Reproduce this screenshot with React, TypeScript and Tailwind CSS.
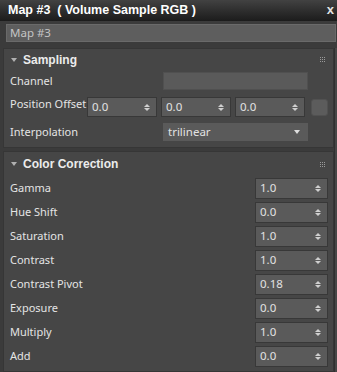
const font = { fontFamily: '"Noto Sans", "Open Sans", sans-serif' };
const arial = { fontFamily: '"Liberation Sans", Arial, sans-serif' };

const Dots = () => (
  <div className="grid grid-cols-3 gap-[1px]">
    {Array.from({ length: 9 }).map((_, i) => (
      <div key={i} className="w-[1px] h-[1px] bg-[#9a9a9a]" />
    ))}
  </div>
);

const Arrows = () => (
  <div className="flex flex-col items-center gap-[1px]">
    <div className="w-0 h-0 border-l-[3px] border-r-[3px] border-b-[3px] border-l-transparent border-r-transparent border-b-[#cfcfcf]" />
    <div className="w-0 h-0 border-l-[3px] border-r-[3px] border-t-[3px] border-l-transparent border-r-transparent border-t-[#cfcfcf]" />
  </div>
);

const Spinner = ({ value, w, h }: { value: string; w: string; h: string }) => (
  <div
    className={`${w} ${h} flex items-center justify-between bg-[#5a5a5a] border border-[#383838] pl-[4px] pr-[6px] text-[11.5px] text-[#e2e2e2]`}
  >
    <span>{value}</span>
    <Arrows />
  </div>
);

const Header = ({ title, h }: { title: string; h: string }) => (
  <div className={`${h} flex items-center justify-between pl-[7px] pr-[8px]`}>
    <div className="flex items-center gap-[6px]">
      <div className="w-0 h-0 border-l-[3px] border-r-[3px] border-t-[4px] border-l-transparent border-r-transparent border-t-[#b0b0b0]" />
      <span className="text-[12px] font-bold text-[#ececec]" style={arial}>
        {title}
      </span>
    </div>
    <Dots />
  </div>
);

const ccRows = [
  ["Gamma", "1.0"],
  ["Hue Shift", "0.0"],
  ["Saturation", "1.0"],
  ["Contrast", "1.0"],
  ["Contrast Pivot", "0.18"],
  ["Exposure", "0.0"],
  ["Multiply", "1.0"],
  ["Add", "0.0"],
];

export default function App() {
  return (
    <div className="w-[337px] h-[372px] overflow-hidden bg-[#3b3b3b] flex flex-col" style={font}>
      {/* title bar */}
      <div className="h-[21px] shrink-0 flex items-center justify-between pl-[8px] pr-[3px] bg-gradient-to-b from-[#424242] to-[#1c1c1c]">
        <span className="text-[12.5px] font-bold text-white whitespace-pre" style={arial}>
          Map #3  ( Volume Sample RGB )
        </span>
        <span className="text-[13px] font-bold text-[#e4e4e4] leading-none pb-[2px]" style={arial}>
          x
        </span>
      </div>

      {/* name field */}
      <div className="pt-[3px] pl-[6px] pr-[1px]">
        <div className="h-[18px] bg-[#5e5e5e] border border-[#6a6a6a] flex items-center pl-[3px] text-[11.5px] text-[#c4c4c4]">
          Map #3
        </div>
      </div>

      <div className="flex-1 flex mt-[6px]">
        <div className="flex-1 flex flex-col gap-[3px] pl-[3px]">
          {/* Sampling */}
          <div className="bg-[#464646] border border-[#363636] pb-[5px]">
            <Header title="Sampling" h="h-[21px]" />
            <div className="h-[22px] flex items-center justify-between pl-[6px] pr-[25px]">
              <span className="text-[11px] text-[#e4e4e4]">Channel</span>
              <div className="w-[145px] h-[18px] bg-[#5a5a5a] border border-[#505050]" />
            </div>
            <div className="h-[30px] flex items-center pl-[6px] pr-[5px]">
              <span className="text-[11px] text-[#e4e4e4] pb-[6px] w-[77px] whitespace-nowrap">Position Offset</span>
              <div className="flex gap-[4px]">
                <Spinner value="0.0" w="w-[70px]" h="h-[20px]" />
                <Spinner value="0.0" w="w-[70px]" h="h-[20px]" />
                <Spinner value="0.0" w="w-[70px]" h="h-[20px]" />
              </div>
              <div className="ml-[6px] w-[17px] h-[17px] rounded-[3px] bg-[#5c5c5c] border border-[#515151]" />
            </div>
            <div className="h-[20px] flex items-center justify-between pl-[6px] pr-[25px]">
              <span className="text-[11px] text-[#e4e4e4]">Interpolation</span>
              <div className="w-[145px] h-[18px] bg-[#5a5a5a] flex items-center justify-between pl-[5px] pr-[8px] text-[11.5px] text-[#e2e2e2]">
                <span>trilinear</span>
                <div className="w-0 h-0 border-l-[3px] border-r-[3px] border-t-[4px] border-l-transparent border-r-transparent border-t-[#dedede]" />
              </div>
            </div>
          </div>

          {/* Color Correction */}
          <div className="flex-1 bg-[#464646] border border-[#363636]">
            <Header title="Color Correction" h="h-[24px]" />
            {ccRows.map(([label, value]) => (
              <div key={label} className="h-[24px] flex items-center justify-between pl-[6px] pr-[5px]">
                <span className="text-[11px] text-[#e4e4e4]">{label}</span>
                <Spinner value={value} w="w-[73px]" h="h-[21px]" />
              </div>
            ))}
          </div>
        </div>
        <div className="w-[5px] bg-[#474747] border-l border-[#303030]" />
      </div>
    </div>
  );
}
